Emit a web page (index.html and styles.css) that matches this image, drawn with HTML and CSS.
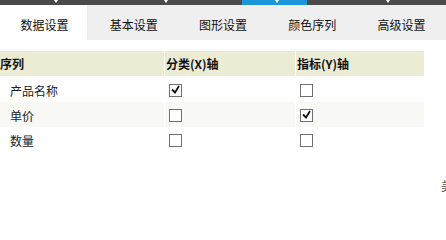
FILE: index.html
```html
<!DOCTYPE html>
<html lang="zh">
<head>
<meta charset="utf-8">
<title>数据设置</title>
<link rel="stylesheet" href="styles.css">
</head>
<body>
<div class="page">
  <div class="topbar">
    <span class="seg"><i class="mark"></i></span>
    <span class="seg"><i class="mark"></i></span>
    <span class="seg active"><i class="mark"></i></span>
    <span class="seg"><i class="mark"></i></span>
  </div>
  <div class="tabs">
    <div class="tab current">数据设置</div>
    <div class="tab">基本设置</div>
    <div class="tab">图形设置</div>
    <div class="tab">颜色序列</div>
    <div class="tab">高级设置</div>
  </div>
  <div class="grid">
    <div class="th first">序列</div>
    <div class="th">分类(X)轴</div>
    <div class="th">指标(Y)轴</div>

    <div class="td name">产品名称</div>
    <div class="td"><span class="cb"><svg viewBox="0 0 13 13" width="13" height="13"><polyline points="3,5.5 6,8.5 10,2" fill="none" stroke="#111" stroke-width="1.8"/></svg></span></div>
    <div class="td"><span class="cb"></span></div>

    <div class="td name alt">单价</div>
    <div class="td alt"><span class="cb"></span></div>
    <div class="td alt"><span class="cb"><svg viewBox="0 0 13 13" width="13" height="13"><polyline points="3,5.5 6,8.5 10,2" fill="none" stroke="#111" stroke-width="1.8"/></svg></span></div>

    <div class="td name">数量</div>
    <div class="td"><span class="cb"></span></div>
    <div class="td"><span class="cb"></span></div>
  </div>
  <div class="footer"><span class="btn">美化</span></div>
</div>
</body>
</html>
```
FILE: styles.css
```css
html, body {
  margin: 0;
  padding: 0;
  overflow: hidden;
  background: #fff;
}
body {
  font-family: "Noto Sans CJK SC", "Noto Sans", sans-serif;
  font-size: 12px;
  color: #222;
}
.page {
  width: 470px;
}
.topbar {
  height: 5px;
  background: #4b4b4b;
  display: flex;
  padding-left: 1px;
}
.seg {
  width: 110px;
  height: 5px;
  display: flex;
  justify-content: center;
}
.seg:nth-child(3) {
  width: 112px;
}
.seg.active {
  background: linear-gradient(to right, transparent 21px, #1b96d6 21px, #1b96d6 86px, transparent 86px);
}
.mark {
  display: block;
  width: 0;
  height: 0;
  border-left: 2.5px solid transparent;
  border-right: 2.5px solid transparent;
  border-top: 3px solid #fff;
}
.tabs {
  display: flex;
  background: #efefef;
  height: 35px;
  width: 446px;
}
.tab {
  width: 88px;
  margin-right: 2px;
  box-sizing: border-box;
  padding-left: 2px;
  padding-top: 4px;
  line-height: 31px;
  text-align: center;
  color: #111;
}
.tab.current {
  background: #fff;
}
.grid {
  margin-top: 11px;
  display: grid;
  grid-template-columns: 164px 130px 128px;
  column-gap: 1px;
  row-gap: 0;
  width: 424px;
}
.th {
  height: 25px;
  background: #ecebd4;
  font-weight: bold;
  color: #111;
  display: flex;
  align-items: center;
  margin-bottom: 1px;
  padding-left: 1px;
}
.th.first {
  padding-left: 0;
}
.td {
  height: 25px;
  box-sizing: border-box;
  padding-top: 2px;
  display: flex;
  align-items: center;
  padding-left: 4px;
}
.td.name {
  padding-left: 10px;
  color: #222;
}
.td.alt {
  background: #f8f8f5;
}
.cb {
  width: 13px;
  height: 13px;
  box-sizing: border-box;
  border: 1px solid #707070;
  background: #fff;
  display: flex;
  align-items: center;
  justify-content: center;
}
.cb svg {
  display: block;
  flex: none;
}
.footer {
  margin-top: 24px;
  height: 20px;
  display: flex;
  justify-content: flex-end;
  padding-right: 5px;
  line-height: 20px;
}
.btn {
  color: #555;
}
```
